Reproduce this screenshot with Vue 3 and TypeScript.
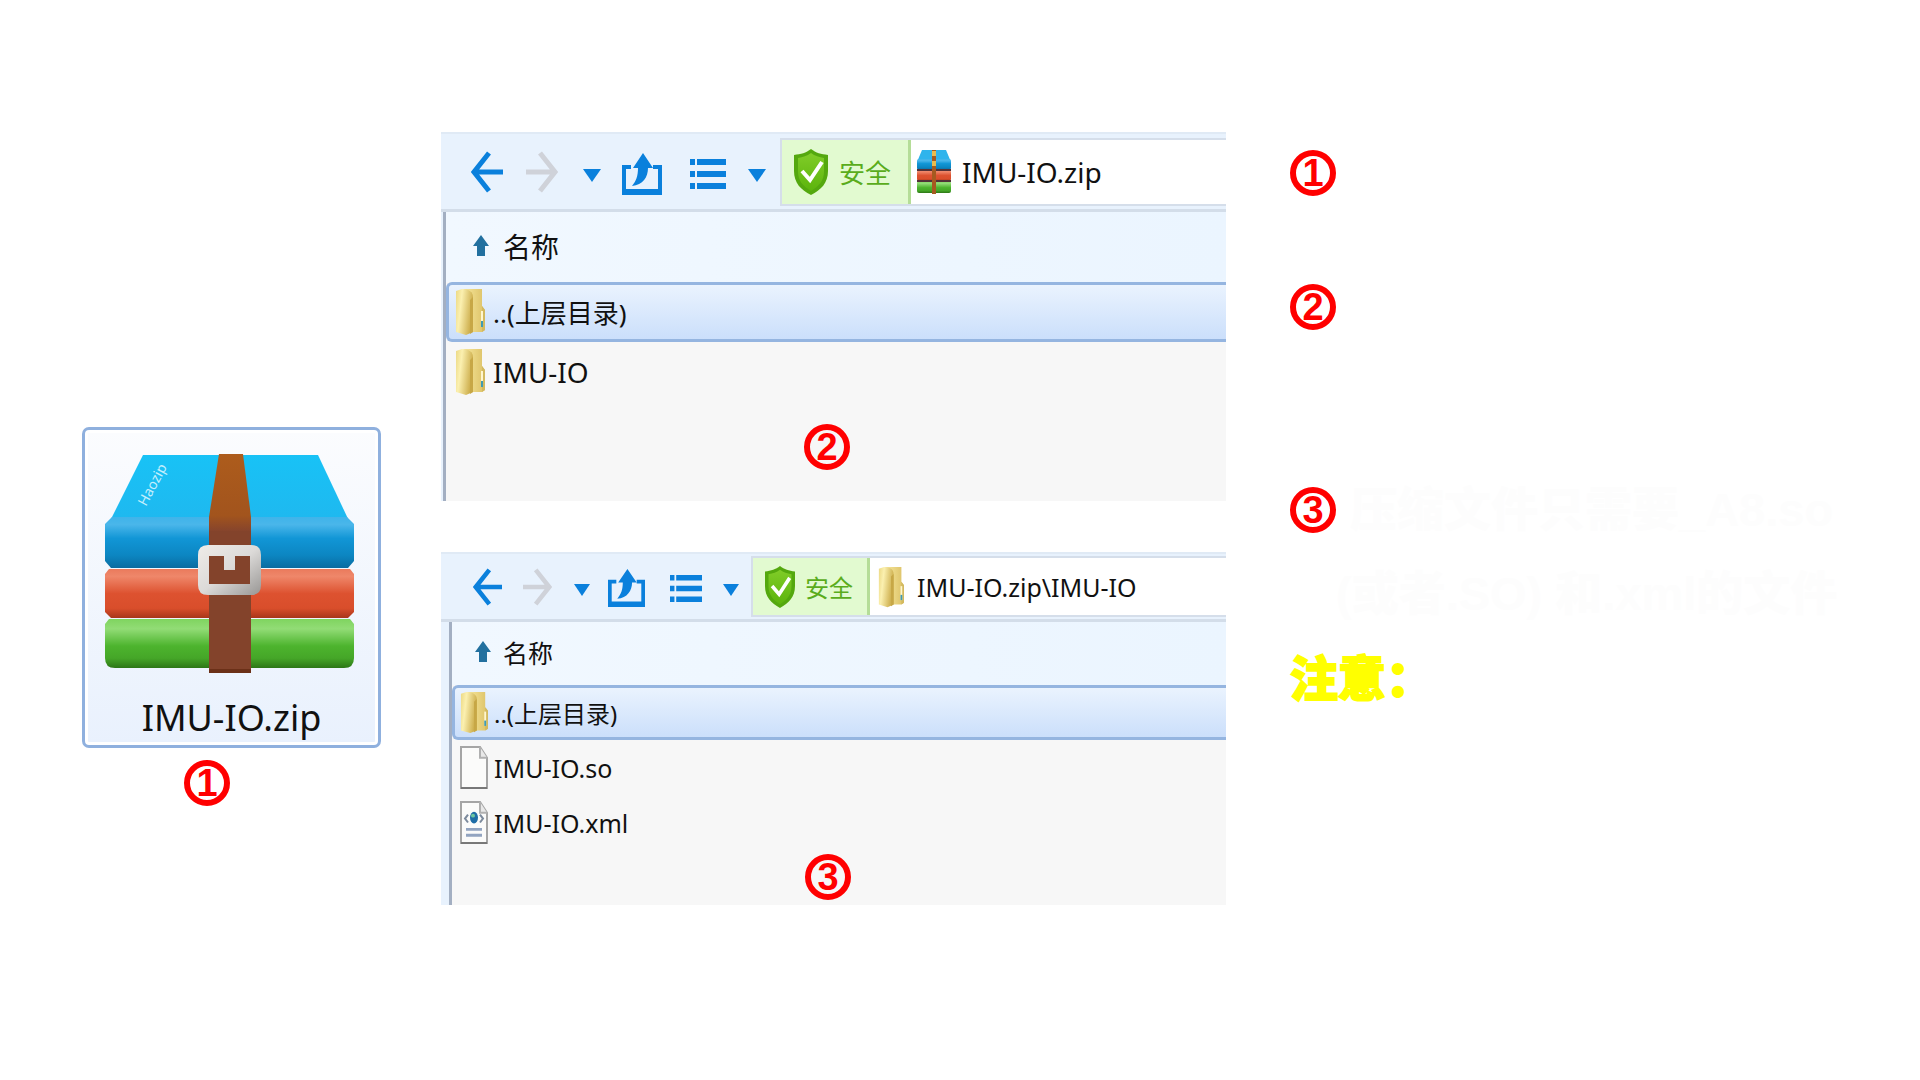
<script setup lang="ts">
interface Entry { name: string; kind: 'folder' | 'file' | 'xml' }
interface Pane { cls: string; path: string; icon: 'zip' | 'folder'; entries: Entry[]; mark: string }

const panes: Pane[] = [
  {
    cls: 'large', path: 'IMU-IO.zip', icon: 'zip', mark: '2',
    entries: [{ name: '..(上层目录)', kind: 'folder' }, { name: 'IMU-IO', kind: 'folder' }],
  },
  {
    cls: 'small', path: 'IMU-IO.zip\\IMU-IO', icon: 'folder', mark: '3',
    entries: [
      { name: '..(上层目录)', kind: 'folder' },
      { name: 'IMU-IO.so', kind: 'file' },
      { name: 'IMU-IO.xml', kind: 'xml' },
    ],
  },
]
</script>

<template>
  <svg class="defs" aria-hidden="true">
    <defs>
      <linearGradient id="blue" x2="0" y2="1"><stop offset="0" stop-color="#3fb4ea" /><stop offset=".15" stop-color="#4ab6ea" /><stop offset=".42" stop-color="#1196d6" /><stop offset=".75" stop-color="#0c86c2" /><stop offset="1" stop-color="#0a6ca0" /></linearGradient>
      <linearGradient id="red" x2="0" y2="1"><stop offset="0" stop-color="#ea7a5c" /><stop offset=".15" stop-color="#ef876a" /><stop offset=".5" stop-color="#dd5230" /><stop offset=".8" stop-color="#d94e2b" /><stop offset="1" stop-color="#a8361a" /></linearGradient>
      <linearGradient id="green" x2="0" y2="1"><stop offset="0" stop-color="#7fd45f" /><stop offset=".2" stop-color="#92dc76" /><stop offset=".55" stop-color="#4db42e" /><stop offset=".8" stop-color="#45a628" /><stop offset="1" stop-color="#2c7616" /></linearGradient>
      <linearGradient id="lid" x2="0" y2="1"><stop offset="0" stop-color="#18c2f6" /><stop offset="1" stop-color="#1fb8ef" /></linearGradient>
      <linearGradient id="buckle" x2="1" y2="1"><stop offset="0" stop-color="#efece8" /><stop offset=".5" stop-color="#dcdad8" /><stop offset="1" stop-color="#989694" /></linearGradient>
      <linearGradient id="strap" x2="0" y2="1"><stop offset="0" stop-color="#ad5c1c" /><stop offset=".8" stop-color="#a2541d" /><stop offset="1" stop-color="#86442c" /></linearGradient>
      <linearGradient id="folderFront" x2="1" y2=".3"><stop offset="0" stop-color="#ecd984" /><stop offset=".35" stop-color="#fbf0b0" /><stop offset="1" stop-color="#cdae4c" /></linearGradient>
      <linearGradient id="folderBack"><stop offset="0" stop-color="#f6e69a" /><stop offset="1" stop-color="#dcc166" /></linearGradient>
      <linearGradient id="shield" x2="0" y2="1"><stop offset="0" stop-color="#80cc28" /><stop offset="1" stop-color="#5cb40c" /></linearGradient>
      <symbol id="i-back" viewBox="0 0 32 42" preserveAspectRatio="none"><path d="M18 2 3 21l15 19M4 21h28" fill="none" stroke="#0a80dc" stroke-width="5" /></symbol>
      <symbol id="i-next" viewBox="0 0 32 42" preserveAspectRatio="none"><path d="m14 2 15 19-15 19M28 21H0" fill="none" stroke="#cfd2d9" stroke-width="5" /></symbol>
      <symbol id="i-up" viewBox="0 0 40 42" preserveAspectRatio="none"><path d="M9 14H2v25h36V14h-7" fill="none" stroke="#0a80dc" stroke-width="4" /><path d="M0 36h40v6H0z" fill="#0a80dc" /><path d="M21 0 31 15h-5c0 9-5 17-16 18 4-5 6-10 6-18h-5z" fill="#0a80dc" /></symbol>
      <symbol id="i-list" viewBox="0 0 36 30" preserveAspectRatio="none"><path d="M0 0h5v6H0zM7 0h29v6H7zM0 12h5v6H0zM7 12h29v6H7zM0 24h5v6H0zM7 24h29v6H7z" fill="#0a80dc" /></symbol>
      <symbol id="i-shield" viewBox="0 0 34 46" preserveAspectRatio="none"><path d="M17 0c5 4 10 5 17 6v16c0 12-7 19-17 24C7 41 0 34 0 22V6c7-1 12-2 17-6z" fill="#54a80e" /><path d="M17 4c4 3 8 4 13 5v13c0 10-5 15-13 20C9 37 4 32 4 22V9c5-1 9-2 13-5z" fill="url(#shield)" /><path d="m8 22 8 9 12-18" fill="none" stroke="#fff" stroke-width="4" /></symbol>
      <symbol id="i-sort" viewBox="0 0 16 22" preserveAspectRatio="none"><path d="m8 0 8 11h-4v10H4V11H0z" fill="#22709f" /></symbol>
      <symbol id="i-folder" viewBox="0 0 30 48" preserveAspectRatio="none"><path d="M9 1h18v17l3 4v20l-3 2H11z" fill="url(#folderBack)" /><path d="M27 18v26l3-2V22z" fill="#d3b95f" /><path d="M1 3 7 1c7 0 11 3 11 8v35l-7 3L1 44z" fill="url(#folderFront)" /><path d="M18 9v35l-3 2V12z" fill="#c7a746" /><path d="M26 23h2v16h-2z" fill="#fff6cf" /><path d="M26 33h2v6h-2z" fill="#3f9bb4" /></symbol>
      <symbol id="i-file" viewBox="0 0 28 44" preserveAspectRatio="none"><path d="M1 1h19l7 11v31H1z" fill="#fbfbfa" stroke="#a5a5a5" stroke-width="2" /><path d="M20 1v11h7" fill="#e8e8e8" stroke="#b0b0b0" stroke-width="2" /><path d="M1 43h26" stroke="#777" stroke-width="2" /></symbol>
      <symbol id="i-xml" viewBox="0 0 28 44" preserveAspectRatio="none"><path d="M1 1h19l7 11v31H1z" fill="#fbfbfa" stroke="#a5a5a5" stroke-width="2" /><path d="M20 1v11h7" fill="#e8e8e8" stroke="#b0b0b0" stroke-width="2" /><path d="M1 43h26" stroke="#777" stroke-width="2" /><path d="m8 14-3 4 3 4m12-8 3 4-3 4" fill="none" stroke="#7c8a9c" stroke-width="2" /><ellipse cx="14" cy="17" rx="4" ry="6" fill="#1e6da6" /><circle cx="13" cy="15" r="2" fill="#6cc6a0" /><path d="M6 29h16M6 35h16" stroke="#92a4c0" stroke-width="3" /></symbol>
      <symbol id="i-zip" viewBox="0 0 34 46" preserveAspectRatio="none"><path d="M5 1h24l5 12H0z" fill="#2fb4ec" /><rect y="10" width="34" height="11" rx="2" fill="url(#blue)" /><rect y="21" width="34" height="11" rx="2" fill="url(#red)" /><rect y="32" width="34" height="12" rx="2" fill="url(#green)" /><path d="M0 21h34M0 32h34" stroke="#523238" stroke-width="2" /><path d="M15 1h4v44h-4z" fill="#a55a20" /><path d="M15 2h4v5h-4zM15 12h4v5h-4z" fill="#e8bc50" /></symbol>
    </defs>
  </svg>

  <main class="board">
    <figure class="archive">
      <div class="tile">
        <svg class="books" viewBox="0 0 250 222" role="img" aria-label="Haozip">
          <path d="M38 1h175l32 68H4z" fill="url(#lid)" />
          <path d="M7 63h235l7 7v37l-6 7H6l-6-7V70z" fill="url(#blue)" />
          <path d="M4 115h241l4 5v38l-6 6H6l-6-6v-38z" fill="url(#red)" />
          <path d="M4 165h241l4 5v34q0 10-10 10H10q-10 0-10-10v-34z" fill="url(#green)" />
          <path d="M104 68h42v151h-42z" fill="#83432b" />
          <path d="M114 0h24l8 63v14h-42V63z" fill="url(#strap)" />
          <path d="M104 215h42v4h-42z" fill="#6b3018" />
          <path fill-rule="evenodd" d="M103 91h43q10 0 10 10v30q0 10-10 10h-43q-10 0-10-10v-30q0-10 10-10zm1 11v28h41v-28h-15v14h-11v-14z" fill="url(#buckle)" />
          <text x="0" y="0" transform="translate(41 53) rotate(-62)" class="brand">Haozip</text>
        </svg>
        <figcaption>IMU-IO.zip</figcaption>
      </div>
      <span class="mark">1</span>
    </figure>

    <div class="panes">
      <section v-for="p in panes" :key="p.path" class="pane" :class="p.cls">
        <nav class="toolbar">
          <button class="back" aria-label="后退"><svg><use href="#i-back" /></svg></button>
          <button class="next" aria-label="前进"><svg><use href="#i-next" /></svg></button>
          <button class="drop" aria-label="历史"></button>
          <button class="up" aria-label="向上"><svg><use href="#i-up" /></svg></button>
          <button class="list" aria-label="查看"><svg><use href="#i-list" /></svg></button>
          <button class="drop" aria-label="查看方式"></button>
          <div class="address">
            <span class="safe"><svg><use href="#i-shield" /></svg>安全</span>
            <svg class="kind" :class="p.icon"><use :href="'#i-' + p.icon" /></svg>
            <span class="path">{{ p.path }}</span>
          </div>
        </nav>
        <div class="listing">
          <div class="head"><svg><use href="#i-sort" /></svg>名称</div>
          <ul>
            <li v-for="(e, i) in p.entries" :key="e.name" :class="{ selected: i === 0 }">
              <svg :class="e.kind"><use :href="'#i-' + e.kind" /></svg>{{ e.name }}
            </li>
          </ul>
        </div>
        <span class="mark">{{ p.mark }}</span>
      </section>
    </div>

    <section class="notes">
      <p class="n1"><span class="mark">1</span></p>
      <p class="n2"><span class="mark">2</span></p>
      <p class="n3"><span class="mark">3</span><span class="faint">压缩文件只需要_A8.so</span></p>
      <p class="cont faint">(或者.SO) 和.xml的文件</p>
      <p class="warn">注意：</p>
    </section>
  </main>
</template>

<style>
body { margin: 0; background: #fff; }
</style>

<style scoped>
* { box-sizing: border-box; }
.defs { position: absolute; width: 0; height: 0; }
.board {
  display: grid;
  grid-template-columns: 441fr 785fr 694fr;
  align-items: start;
  font-family: "Noto Sans", "Noto Sans CJK SC", sans-serif;
  color: #111;
}
figure, p, ul { margin: 0; padding: 0; }
svg { display: block; flex: none; }

.archive { padding: 427px 0 0 82px; }
.tile {
  width: 299px;
  height: 321px;
  padding-top: 24px;
  border: 3px solid #8fb0de;
  border-radius: 7px;
  box-shadow: inset 0 0 0 3px #fff;
  background: linear-gradient(#fbfcfe, #e9f1fd);
}
.books { width: 250px; height: 222px; margin-left: 20px; }
.brand { fill: #c4effd; font: 14px "Noto Sans", sans-serif; }
figcaption { font-size: 36px; line-height: 48px; text-align: center; margin-top: 18px; }
.archive .mark { margin: 12px 0 0 102px; }

.mark {
  display: flex;
  align-items: center;
  justify-content: center;
  flex: none;
  width: 46px;
  height: 46px;
  border: 6px solid #f00;
  border-radius: 50%;
  color: #f00;
  font: 700 38px/34px "Liberation Sans", sans-serif;
}

.panes { padding-top: 132px; }
.pane { position: relative; background: #e8f2fd; font-size: 28px; }
.pane > .mark { position: absolute; }
.large { height: 369px; margin-bottom: 51px; }
.small { height: 353px; font-size: 25px; }
.large > .mark { left: 363px; top: 292px; }
.small > .mark { left: 364px; top: 302px; }

.toolbar { display: flex; align-items: center; border-top: 2px solid #e0eaf5; border-bottom: 3px solid #d3dde9; }
.large .toolbar { height: 80px; padding: 1px 0 0 30px; }
.small .toolbar { height: 70px; padding-left: 32px; }
.toolbar button { border: 0; padding: 0; background: none; flex: none; }
.toolbar button svg { width: 100%; height: 100%; }
.large .back, .large .next { width: 32px; height: 42px; }
.large .next { margin-left: 23px; }
.large .drop { margin-left: 25px; }
.large .up { width: 40px; height: 42px; margin: 3px 0 0 21px; }
.large .list { width: 36px; height: 30px; margin: 3px 0 0 28px; }
.large .list + .drop { margin-left: 22px; }
.small .back, .small .next { width: 29px; height: 38px; }
.small .next { margin-left: 21px; }
.small .drop { margin-left: 22px; }
.small .up { width: 37px; height: 38px; margin: 3px 0 0 18px; }
.small .list { width: 32px; height: 27px; margin: 3px 0 0 25px; }
.small .list + .drop { margin-left: 21px; }
.drop::before { content: ""; display: block; margin-top: 6px; border: 9px solid transparent; border-top: 13px solid #0a80dc; border-bottom: 0; }
.small .drop::before { border-width: 12px 8px 0; }

.address { display: flex; flex: 1; align-items: center; border: 2px solid #d5deea; border-right: 0; background: #fff; }
.large .address { height: 68px; margin-left: 14px; }
.small .address { height: 61px; margin-left: 12px; }
.safe { display: flex; align-items: center; height: 100%; color: #5aac1c; background: #e2fad0; border-right: 3px solid #b5dd98; }
.large .safe { width: 129px; padding-left: 12px; gap: 11px; font-size: 26px; }
.small .safe { width: 117px; padding-left: 12px; gap: 10px; font-size: 24px; }
.large .safe svg, .kind.zip { width: 34px; height: 46px; }
.small .safe svg { width: 30px; height: 42px; }
.kind.zip { margin: 0 11px 0 6px; }
.kind.folder { width: 26px; height: 42px; margin: 0 13px 0 8px; }

.listing { background: #f7f7f7; border-left: 3px solid #a3afc2; }
.large .listing { height: 289px; margin-left: 2px; }
.small .listing { height: 283px; margin-left: 8px; }
.head { display: flex; align-items: center; background: linear-gradient(90deg, #f1f8ff, #ebf5ff); }
.head svg { width: 16px; height: 22px; }
.large .head { height: 70px; padding: 0 0 3px 27px; gap: 14px; }
.small .head { height: 63px; padding: 0 0 3px 23px; gap: 12px; }
ul { list-style: none; }
li { display: flex; align-items: center; white-space: pre; }
.large li { height: 60px; padding-left: 9px; gap: 8px; }
.small li { height: 55px; padding-left: 8px; gap: 6px; }
.selected { border: 3px solid #95b5e0; border-right: 0; border-radius: 6px 0 0 6px; background: linear-gradient(#eaf3fe, #cbdffb); }
.large .selected { padding-left: 6px; font-size: 26px; }
.small .selected { padding-left: 5px; font-size: 24px; }
.large li svg { width: 30px; height: 48px; }
.small li svg { width: 28px; height: 43px; }

.notes {
  padding: 150px 0 0 64px;
  font: 900 48px/84px "Liberation Sans", "Noto Sans CJK SC", sans-serif;
}
.notes p { display: flex; align-items: center; white-space: pre; }
.n1 { height: 46px; margin-bottom: 88px; }
.n2 { height: 46px; margin-bottom: 138px; }
.n3 { height: 84px; gap: 14px; }
.cont { padding-left: 46px; }
.faint { color: #fdfdfd; font-size: 47px; }
.notes .warn { color: #ff0; -webkit-text-stroke: 2px #ff0; line-height: 88px; }
</style>
